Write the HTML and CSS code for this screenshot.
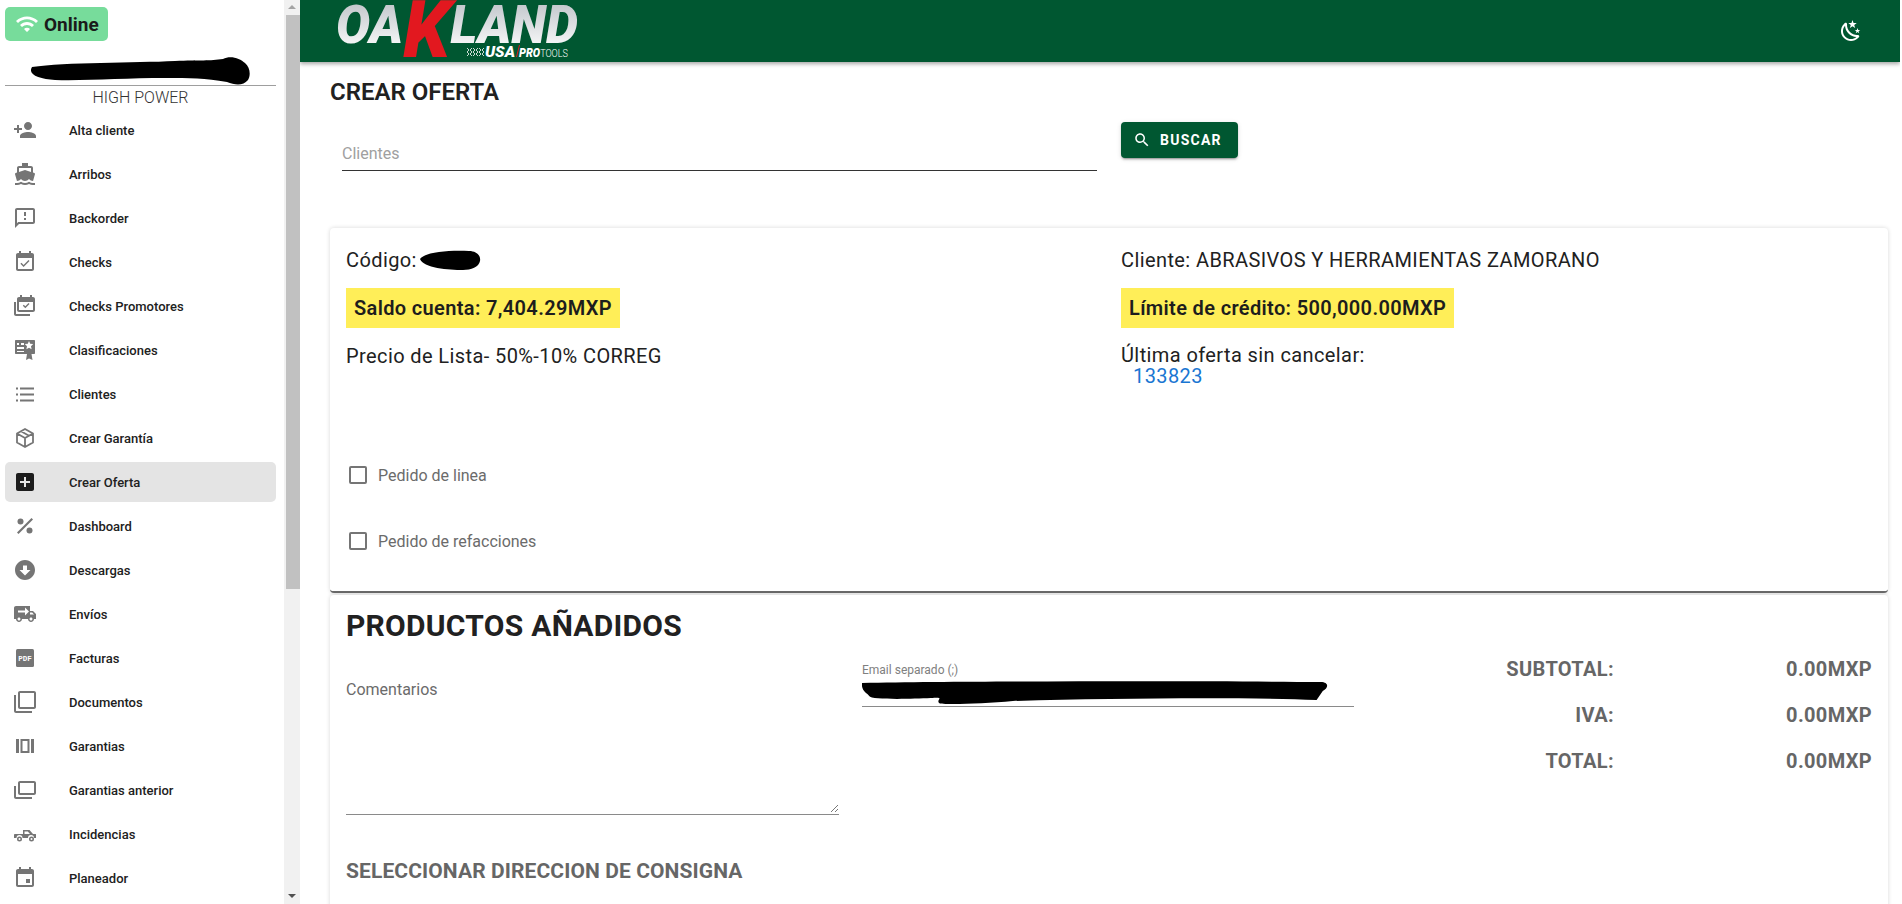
FILE: index.html
```html
<!DOCTYPE html>
<html lang="es">
<head>
<meta charset="utf-8">
<title>Crear Oferta</title>
<link rel="stylesheet" href="styles.css">
</head>
<body>
<div class="app">
  <aside class="sidebar">
    <div class="side-content">
      <div class="online"><svg class="wifi" viewBox="0 0 24 24"><path d="M1 9l2 2c4.97-4.97 13.03-4.97 18 0l2-2C16.93 2.93 7.08 2.93 1 9zm8 8l3 3 3-3c-1.65-1.66-4.34-1.66-6 0zm-4-4l2 2c2.76-2.76 7.24-2.76 10 0l2-2C15.14 9.14 8.87 9.14 5 13z"/></svg><span>Online</span></div>
      <div class="user-name"><svg class="scribble-name" viewBox="0 0 271 30"><path d="M27 12C60 7 130 8 170 6C195 5 205 6 218 4C225 0 235 3 240 8C245 12 246 20 243 25C238 31 230 30 222 27C200 23 185 23 160 23C120 23 80 26 50 25C35 24 22 20 27 12Z" fill="#000"/></svg></div>
      <div class="company">HIGH POWER</div>
      <nav class="menu">
        <a class="item"><svg class="ico" viewBox="0 0 24 24"><path d="M15 12c2.21 0 4-1.79 4-4s-1.79-4-4-4-4 1.79-4 4 1.79 4 4 4zm-9-2V7H4v3H1v2h3v3h2v-3h3v-2H6zm9 4c-2.67 0-8 1.34-8 4v2h16v-2c0-2.66-5.33-4-8-4z"/></svg><span>Alta cliente</span></a>
        <a class="item"><svg class="ico" viewBox="0 0 24 24"><path d="M20 21c-1.39 0-2.78-.47-4-1.32-2.44 1.71-5.56 1.71-8 0C6.78 20.53 5.39 21 4 21H2v2h2c1.38 0 2.74-.35 4-.99 2.52 1.29 5.48 1.29 8 0 1.26.65 2.62.99 4 .99h2v-2h-2zM3.95 19H4c1.6 0 3.02-.88 4-2 .98 1.12 2.4 2 4 2s3.02-.88 4-2c.98 1.12 2.4 2 4 2h.05l1.89-6.68c.08-.26.06-.54-.06-.78s-.34-.42-.6-.5L20 10.62V6c0-1.1-.9-2-2-2h-3V1H9v3H6c-1.1 0-2 .9-2 2v4.62l-1.29.42c-.26.08-.48.26-.6.5s-.15.52-.06.78L3.95 19zM6 6h12v3.97L12 8 6 9.97V6z"/></svg><span>Arribos</span></a>
        <a class="item"><svg class="ico" viewBox="0 0 24 24"><path d="M20 2H4c-1.1 0-2 .9-2 2v18l4-4h14c1.1 0 2-.9 2-2V4c0-1.1-.9-2-2-2zm0 14H5.17L4 17.17V4h16v12zM11 12h2v2h-2zm0-6h2v4h-2z"/></svg><span>Backorder</span></a>
        <a class="item"><svg class="ico" viewBox="0 0 24 24"><path d="M16.53 11.06L15.47 10l-4.88 4.88-2.12-2.12-1.06 1.06L10.59 17l5.94-5.94zM19 3h-1V1h-2v2H8V1H6v2H5c-1.11 0-1.99.9-1.99 2L3 19c0 1.1.89 2 2 2h14c1.1 0 2-.9 2-2V5c0-1.1-.9-2-2-2zm0 16H5V8h14v11z"/></svg><span>Checks</span></a>
        <a class="item"><svg class="ico" viewBox="0 0 24 24"><path d="M1 8h2v12h14v2H3c-1.1 0-2-.9-2-2V8zM20 3h-1V1h-2v2H9V1H7v2H6c-1.1 0-2 .9-2 2v11c0 1.1.9 2 2 2h14c1.1 0 2-.9 2-2V5c0-1.1-.9-2-2-2zm0 13H6V8h14v8zM16.5 10l-1-1-3.2 3.2-1.5-1.5-1 1 2.5 2.5 4.2-4.2z"/></svg><span>Checks Promotores</span></a>
        <a class="item"><svg class="ico" viewBox="0 0 24 24"><path fill-rule="evenodd" d="M3 2h18c.6 0 1 .4 1 1v12c0 .6-.4 1-1 1h-2.500l1 6-3.500-1.500L13 22l1-6H3c-.6 0-1-.4-1-1V3c0-.6.4-1 1-1zm1 3v2h2V5H4zm4 0v2h3V5H8zm-4 4v2h7V9H4zm0 4v1h7v-1H4zm12-10l-1.200 2.800-3 .3 2.200 2.100-.6 3 2.600-1.500 2.600 1.500-.6-3 2.200-2.100-3-.3L16 3z"/></svg><span>Clasificaciones</span></a>
        <a class="item"><svg class="ico" viewBox="0 0 24 24"><path d="M3 7.500h2v-2H3v2zm0 6h2v-2H3v2zm0 6h2v-2H3v2zM7 7.500h14v-2H7v2zm0 6h14v-2H7v2zm0 6h14v-2H7v2z"/></svg><span>Clientes</span></a>
        <a class="item"><svg class="ico" viewBox="0 0 24 24"><path class="line-ico" d="M12 3l8 4.500v9L12 21l-8-4.500v-9L12 3zM4 7.500l8 4.500 8-4.500M12 12v9M8 5.250l8 4.500"/></svg><span>Crear Garantía</span></a>
        <a class="item active"><svg class="ico" viewBox="0 0 24 24"><path d="M19 3H5c-1.11 0-2 .9-2 2v14c0 1.100.89 2 2 2h14c1.100 0 2-.9 2-2V5c0-1.100-.9-2-2-2zm-2 10h-4v4h-2v-4H7v-2h4V7h2v4h4v2z"/></svg><span>Crear Oferta</span></a>
        <a class="item"><svg class="ico" viewBox="0 0 24 24"><circle cx="7.500" cy="7.500" r="3"/><circle cx="16.500" cy="16.500" r="3"/><path d="M18.500 4l1.500 1.500L5.500 20 4 18.500z"/></svg><span>Dashboard</span></a>
        <a class="item"><svg class="ico" viewBox="0 0 24 24"><path d="M12 2C6.480 2 2 6.480 2 12s4.480 10 10 10 10-4.480 10-10S17.520 2 12 2zm0 15.500L6.500 12H10V7.500h4V12h3.500L12 17.500z"/></svg><span>Descargas</span></a>
        <a class="item"><svg class="ico" viewBox="0 0 24 24"><path d="M20 9h-3V4H3c-1.100 0-2 .9-2 2v11h2c0 1.660 1.340 3 3 3s3-1.340 3-3h6c0 1.660 1.340 3 3 3s3-1.340 3-3h2v-5l-3-3zM6 18.500c-.83 0-1.500-.67-1.500-1.500s.67-1.500 1.500-1.500 1.500.67 1.500 1.500-.67 1.500-1.500 1.500zm6-5v-3H5v-2h7v-3l4 4-4 4zm6 5c-.83 0-1.500-.67-1.500-1.500s.67-1.500 1.500-1.500 1.500.67 1.500 1.500-.67 1.500-1.500 1.500zM17 12.500v-2h2.200l1.800 2h-4z"/></svg><span>Envíos</span></a>
        <a class="item"><svg class="ico" viewBox="0 0 24 24"><rect x="3" y="3" width="18" height="18" rx="1.500"/><text class="pdf-text" x="12" y="15">PDF</text></svg><span>Facturas</span></a>
        <a class="item"><svg class="ico" viewBox="0 0 24 24"><path d="M3 5H1v16c0 1.100.9 2 2 2h16v-2H3V5zm18-4H7c-1.100 0-2 .9-2 2v14c0 1.100.9 2 2 2h14c1.100 0 2-.9 2-2V3c0-1.100-.9-2-2-2zm0 16H7V3h14v14z"/></svg><span>Documentos</span></a>
        <a class="item"><svg class="ico" viewBox="0 0 24 24"><path fill-rule="evenodd" d="M3 5h3v14H3zM18 5h3v14h-3zM7.500 5h9v14h-9zM9.500 7v10h5V7z"/></svg><span>Garantias</span></a>
        <a class="item"><svg class="ico" viewBox="0 0 24 24"><path d="M1 8h2v11h16v2H3c-1.100 0-2-.9-2-2V8zM21 3H7c-1.100 0-2 .9-2 2v10c0 1.100.9 2 2 2h14c1.100 0 2-.9 2-2V5c0-1.100-.9-2-2-2zm0 12H7V5h14v10z"/></svg><span>Garantias anterior</span></a>
        <a class="item"><svg class="ico" viewBox="0 0 24 24"><path fill-rule="evenodd" d="M9 8h7.500l3.500 4h2.500c.5 0 .5.5.5 1v3h-2a3 3 0 0 0-6 0H9.500a3 3 0 0 0-6 0H1v-3c0-.5.3-1 1-1h8V8zm2.500 1.500V12h5.500l-2.200-2.500h-3.300zM6.500 14.500a2.500 2.500 0 1 1 0 5 2.500 2.500 0 0 1 0-5zm0 1.500a1 1 0 1 0 0 2 1 1 0 0 0 0-2zm12-1.500a2.500 2.500 0 1 1 0 5 2.500 2.500 0 0 1 0-5zm0 1.500a1 1 0 1 0 0 2 1 1 0 0 0 0-2z"/></svg><span>Incidencias</span></a>
        <a class="item"><svg class="ico" viewBox="0 0 24 24"><path d="M19 3h-1V1h-2v2H8V1H6v2H5c-1.110 0-1.990.9-1.990 2L3 19c0 1.100.89 2 2 2h14c1.100 0 2-.9 2-2V5c0-1.100-.9-2-2-2zm0 16H5V8h14v11zM13 13h4v4h-4z"/></svg><span>Planeador</span></a>
      </nav>
    </div>
    <div class="scrollbar">
      <div class="arrow-up"></div>
      <div class="thumb"></div>
      <div class="track"></div>
      <div class="arrow-down"></div>
    </div>
  </aside>

  <main class="main">
    <header class="topbar">
      <svg class="logo" viewBox="0 0 244 62">
        <defs>
          <linearGradient id="chrome" x1="0" y1="0" x2="0" y2="1">
            <stop offset="0.15" stop-color="#bcc1c6"/>
            <stop offset="0.75" stop-color="#ffffff"/>
          </linearGradient>
        </defs>
        <path class="logo-check" d="M131 48l2 2-2 2 2 2-2 2M136 48l-2 2 2 2-2 2 2 2M137 48l2 2-2 2 2 2-2 2M142 48l-2 2 2 2-2 2 2 2M143 48l2 2-2 2 2 2-2 2M148 48l-2 2 2 2-2 2 2 2"/>
        <text class="logo-word" x="0" y="43" textLength="242" lengthAdjust="spacingAndGlyphs">OA<tspan class="logo-k" dy="14">K</tspan><tspan dy="-14">LAND</tspan></text>
        <path class="logo-slash" d="M180 57l3-12h1l-3 12z"/>
        <text class="logo-usa" x="149" y="57" textLength="30" lengthAdjust="spacingAndGlyphs">USA</text>
        <text class="logo-pro" x="183" y="57" textLength="49" lengthAdjust="spacingAndGlyphs">PRO<tspan class="logo-tools">TOOLS</tspan></text>
      </svg>
      <svg class="moon" viewBox="0 0 24 24"><path d="M17.750 4.090L15.220 6.030L16.130 9.090L13.500 7.280L10.870 9.090L11.780 6.030L9.250 4.090L12.440 4L13.500 1L14.560 4L17.750 4.090M21.250 11L19.610 12.250L20.200 14.230L18.500 13.060L16.800 14.230L17.390 12.250L15.750 11L17.810 10.950L18.500 9L19.190 10.950L21.250 11M18.970 15.950C19.800 15.870 20.690 17.050 20.160 17.800C19.840 18.250 19.500 18.670 19.080 19.070C15.170 23 8.840 23 4.940 19.070C1.030 15.170 1.030 8.830 4.940 4.930C5.340 4.530 5.760 4.170 6.210 3.850C6.960 3.320 8.140 4.210 8.060 5.040C7.790 7.900 8.750 10.870 10.950 13.060C13.140 15.260 16.100 16.220 18.970 15.950M17.330 17.970C14.500 17.810 11.700 16.640 9.530 14.500C7.360 12.310 6.200 9.500 6.040 6.680C3.230 9.820 3.340 14.640 6.350 17.660C9.370 20.670 14.190 20.780 17.330 17.970Z"/></svg>
    </header>

    <div class="content">
      <h1 class="page-title">CREAR OFERTA</h1>
      <div class="search-row">
        <div class="search-field"><span class="placeholder">Clientes</span></div>
        <button class="btn-search"><svg class="search-ico" viewBox="0 0 24 24"><path d="M15.500 14h-.79l-.28-.27C15.410 12.590 16 11.110 16 9.500 16 5.910 13.090 3 9.500 3S3 5.910 3 9.500 5.910 16 9.500 16c1.610 0 3.090-.59 4.230-1.570l.27.28v.79l5 4.990L20.490 19l-4.990-5zm-6 0C7.010 14 5 11.990 5 9.500S7.010 5 9.500 5 14 7.010 14 9.500 11.990 14 9.500 14z"/></svg>BUSCAR</button>
      </div>

      <section class="card card-client">
        <div class="client-grid">
          <div class="col">
            <p class="line line-code">Código: <svg class="scribble-code" viewBox="0 0 62 20"><path d="M1 9C6 2 30 0 50 1C58 1 62 6 61 11C60 17 52 20 44 20C30 20 4 18 1 9Z" fill="#000"/></svg></p>
            <div class="hl">Saldo cuenta: 7,404.29MXP</div>
            <p class="line">Precio de Lista- 50%-10% CORREG</p>
          </div>
          <div class="col">
            <p class="line line-code">Cliente: ABRASIVOS Y HERRAMIENTAS ZAMORANO</p>
            <div class="hl">Límite de crédito: 500,000.00MXP</div>
            <p class="line line-tight">Última oferta sin cancelar:</p>
            <a class="offer-link">133823</a>
          </div>
        </div>
        <label class="check check-first"><span class="box"></span>Pedido de linea</label>
        <label class="check"><span class="box"></span>Pedido de refacciones</label>
      </section>

      <section class="card card-products">
        <h2 class="products-title">PRODUCTOS AÑADIDOS</h2>
        <div class="products-row">
          <div class="comments">
            <span class="comments-label">Comentarios</span>
            <svg class="resizer" viewBox="0 0 9 9"><path d="M1 8L8 1M5 8L8 5"/></svg>
          </div>
          <div class="email">
            <span class="email-label">Email separado (;)</span>
            <div class="email-value"><svg class="scribble-email" viewBox="3 0 458 27" preserveAspectRatio="none"><path d="M3 4C120 2 350 2 450 3C458 3 458 9 452 12L446 21C380 18 250 19 150 22C120 25 80 26 78 24C75 20 85 18 70 19C50 20 12 21 10 17C8 14 2 12 3 4Z" fill="#000"/></svg></div>
          </div>
          <div class="totals">
            <span class="total-label">SUBTOTAL:</span><span class="total-value">0.00MXP</span>
            <span class="total-label">IVA:</span><span class="total-value">0.00MXP</span>
            <span class="total-label">TOTAL:</span><span class="total-value">0.00MXP</span>
          </div>
        </div>
        <h3 class="consigna">SELECCIONAR DIRECCION DE CONSIGNA</h3>
      </section>
    </div>
  </main>
</div>
</body>
</html>
```
FILE: styles.css
```css
* { box-sizing: border-box; }
html, body { margin: 0; height: 904px; overflow: hidden; background: #fff; }
body { font-family: Roboto, "Liberation Sans", sans-serif; color: #212121; }
p, h1, h2, h3 { margin: 0; }

.app { display: flex; width: 1902px; height: 904px; overflow: hidden; }

/* Sidebar */
.sidebar { display: flex; width: 300px; height: 904px; flex: none; }
.side-content { width: 284px; padding: 7px 8px 0 5px; overflow: hidden; background: #fff; }
.online { display: flex; align-items: center; width: 103px; height: 34px; padding-left: 10px; gap: 5px; border-radius: 5px; background: #77dc9b; font-size: 19px; font-weight: 700; color: #1a1a1a; }
.wifi { width: 24px; height: 24px; fill: #fff; }
.user-name { height: 45px; border-bottom: 1px solid #9e9e9e; padding-top: 14px; }
.scribble-name { display: block; width: 271px; height: 30px; }
.company { height: 24px; text-align: center; font-size: 16px; font-weight: 300; line-height: 24px; color: #333; }
.menu { display: flex; flex-direction: column; gap: 4px; }
.item { display: flex; align-items: center; height: 40px; padding-left: 8px; border-radius: 5px; font-size: 13px; font-weight: 500; color: #212121; flex: none; }
.item span { margin-left: 32px; }
.ico { width: 24px; height: 24px; flex: none; fill: #757575; }
.active { background: #e4e4e4; }
.active .ico { fill: #1c1c1c; }
.line-ico { fill: none; stroke: #757575; stroke-width: 1.800; stroke-linejoin: round; }
.pdf-text { fill: #fff; font-family: "Liberation Mono", monospace; font-size: 7.500px; font-weight: 700; text-anchor: middle; }

.scrollbar { display: flex; flex-direction: column; width: 16px; height: 904px; background: #f1f1f1; }
.arrow-up { height: 15px; flex: none; }
.arrow-up::after { content: ""; display: block; margin: 5px auto 0; width: 0; height: 0; border-left: 4px solid transparent; border-right: 4px solid transparent; border-bottom: 4px solid #a3a3a3; }
.thumb { height: 574px; margin-left: 2px; flex: none; background: #c1c1c1; }
.track { flex: 1; }
.arrow-down { height: 15px; flex: none; }
.arrow-down::after { content: ""; display: block; margin: 5px auto 0; width: 0; height: 0; border-left: 4px solid transparent; border-right: 4px solid transparent; border-top: 4px solid #505050; }

/* Main */
.main { width: 1600px; flex: none; height: 904px; overflow: hidden; }
.topbar { display: flex; align-items: flex-start; justify-content: space-between; height: 62px; padding: 0 37px 0 36px; background: #005731; box-shadow: 0 2px 4px rgba(0,0,0,.35); position: relative; }
.logo { width: 244px; height: 62px; flex: none; }
.logo-word { font-family: Roboto, sans-serif; font-size: 53px; font-weight: 900; font-style: italic; fill: url(#chrome); }
.logo-k { font-size: 79px; fill: #e2181f; }
.logo-usa { font-family: Roboto, sans-serif; font-size: 14px; font-weight: 900; font-style: italic; fill: #fff; }
.logo-slash { fill: #e2181f; }
.logo-pro { font-family: Roboto, sans-serif; font-size: 12px; font-weight: 900; font-style: italic; fill: #fff; }
.logo-tools { font-size: 10px; font-weight: 300; font-style: normal; }
.logo-check { fill: none; stroke: #fff; stroke-width: 1; opacity: .8; }
.moon { width: 24px; height: 24px; margin-top: 19px; fill: #fff; flex: none; }

.content { padding: 0 12px 0 30px; }
.page-title { margin-top: 16px; font-size: 24px; line-height: 28px; font-weight: 600; color: #212121; }
.search-row { display: flex; height: 106px; padding-left: 12px; margin-top: 16px; }
.search-field { width: 755px; height: 49px; padding-top: 22px; border-bottom: 1px solid #333; }
.placeholder { display: block; font-size: 16px; line-height: 20px; color: #a0a0a0; }
.btn-search { display: flex; align-items: center; width: 117px; height: 36px; margin-left: 24px; padding: 0 0 0 12px; border: 0; border-radius: 4px; background: #005731; color: #fff; font-family: Roboto, sans-serif; font-size: 14px; font-weight: 700; letter-spacing: 1.250px; box-shadow: 0 3px 1px -2px rgba(0,0,0,.2), 0 2px 2px rgba(0,0,0,.14), 0 1px 5px rgba(0,0,0,.12); }
.search-ico { width: 18px; height: 18px; margin-right: 9px; fill: #fff; }

.card { background: #fff; border-radius: 4px; box-shadow: 0 0 4px rgba(0,0,0,.16); }
.card-client { height: 365px; padding: 0 16px; border-bottom: 2px solid #6a6a6a; }
.client-grid { display: grid; grid-template-columns: 775px 1fr; padding-top: 21px; height: 220px; }
.col { min-width: 0; }
.line { font-size: 20px; letter-spacing: .4px; line-height: 22px; color: #212121; }
.line-code { display: flex; align-items: center; height: 22px; white-space: pre; }
.scribble-code { width: 62px; height: 20px; margin-left: -3px; }
.hl { display: inline-block; height: 40px; margin-top: 17px; padding: 0 8px; background: #ffee58; font-size: 20px; letter-spacing: .35px; line-height: 40px; font-weight: 600; color: #1d1d1d; }
.hl + .line { margin-top: 17px; }
.line-tight { line-height: 21px; }
.offer-link { display: block; margin-left: 12px; font-size: 20px; letter-spacing: .4px; line-height: 20px; color: #1976d2; }
.check { display: flex; align-items: center; height: 24px; padding-left: 3px; margin-top: 42px; font-size: 16px; color: #6b6b6b; }
.check-first { margin-top: 15px; }
.box { width: 18px; height: 18px; margin-right: 11px; border: 2px solid #757575; border-radius: 2px; }

.card-products { height: 320px; margin-top: 2px; padding: 0 16px; }
.products-title { padding-top: 12px; font-size: 30px; letter-spacing: .27px; line-height: 38px; font-weight: 700; color: #212121; }
.products-row { display: flex; height: 199px; margin-top: 13px; }
.comments { position: relative; width: 493px; height: 157px; padding-top: 22px; border-bottom: 1px solid #8a8a8a; }
.comments-label { font-size: 16px; line-height: 20px; color: #6b6b6b; }
.resizer { position: absolute; right: 0; bottom: 1px; width: 9px; height: 9px; fill: none; stroke: #555; stroke-width: .8; }
.email { width: 492px; margin-left: 23px; margin-top: 5px; height: 44px; border-bottom: 1px solid #8a8a8a; }
.email-label { display: block; height: 14px; font-size: 12px; line-height: 14px; color: #808080; }
.email-value { height: 24px; padding-top: 2px; }
.scribble-email { display: block; width: 470px; height: 27px; }
.totals { display: grid; grid-template-columns: 260px 258px; grid-auto-rows: 46px; align-items: center; height: 138px; margin-top: -12px; font-size: 20px; letter-spacing: .35px; font-weight: 700; color: #666; text-align: right; }
.consigna { font-size: 21px; letter-spacing: .1px; line-height: 28px; font-weight: 700; color: #666; }
```
